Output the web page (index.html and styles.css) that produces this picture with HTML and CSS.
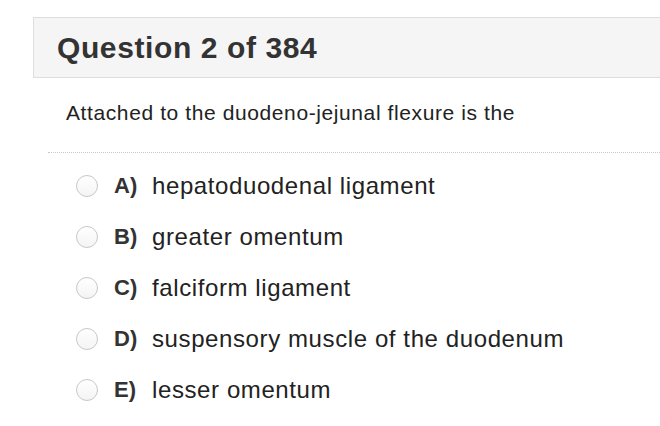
FILE: index.html
```html
<!DOCTYPE html>
<html>
<head>
<meta charset="utf-8">
<link rel="stylesheet" href="styles.css">
</head>
<body>
<div class="header"><h1 class="title">Question 2 of 384</h1></div>
<p class="question">Attached to the duodeno-jejunal flexure is the</p>
<div class="divider"></div>
<ul class="options">
  <li class="option"><span class="radio"></span><span class="letter">A)</span><span class="text">hepatoduodenal ligament</span></li>
  <li class="option"><span class="radio"></span><span class="letter">B)</span><span class="text">greater omentum</span></li>
  <li class="option"><span class="radio"></span><span class="letter">C)</span><span class="text">falciform ligament</span></li>
  <li class="option"><span class="radio"></span><span class="letter">D)</span><span class="text">suspensory muscle of the duodenum</span></li>
  <li class="option"><span class="radio"></span><span class="letter">E)</span><span class="text">lesser omentum</span></li>
</ul>
</body>
</html>
```
FILE: styles.css
```css
html, body {
  margin: 0;
  padding: 0;
  background: #ffffff;
  font-family: "Liberation Sans", Arial, Helvetica, sans-serif;
}
body {
  padding-top: 17px;
}
.header {
  margin-left: 33px;
  height: 59px;
  background: #f5f5f5;
  border: 1px solid #dedede;
  border-right: none;
  display: flex;
  align-items: center;
  padding-left: 23px;
}
.title {
  margin: 0;
  font-size: 30px;
  font-weight: bold;
  color: #333333;
  letter-spacing: 0.6px;
}
.question {
  margin: 0;
  padding: 23px 0 0 66px;
  height: 50px;
  box-sizing: border-box;
  font-size: 21px;
  color: #222222;
  letter-spacing: 0.6px;
  line-height: 24px;
}
.divider {
  margin-left: 48px;
  margin-top: 24px;
  border-top: 1px dotted #c8c8c8;
}
.options {
  list-style: none;
  margin: 0;
  padding: 7px 0 0 76px;
}
.option {
  display: flex;
  align-items: center;
  height: 51px;
  color: #222222;
}
.radio {
  width: 20px;
  height: 20px;
  border: 1px solid #c8c8c8;
  border-radius: 50%;
  background: linear-gradient(#ffffff, #f4f4f4);
  box-sizing: content-box;
  margin-right: 16px;
}
.letter {
  font-weight: bold;
  font-size: 22px;
  color: #333333;
  width: 38px;
}
.text {
  font-size: 24px;
  letter-spacing: 0.6px;
}
```
